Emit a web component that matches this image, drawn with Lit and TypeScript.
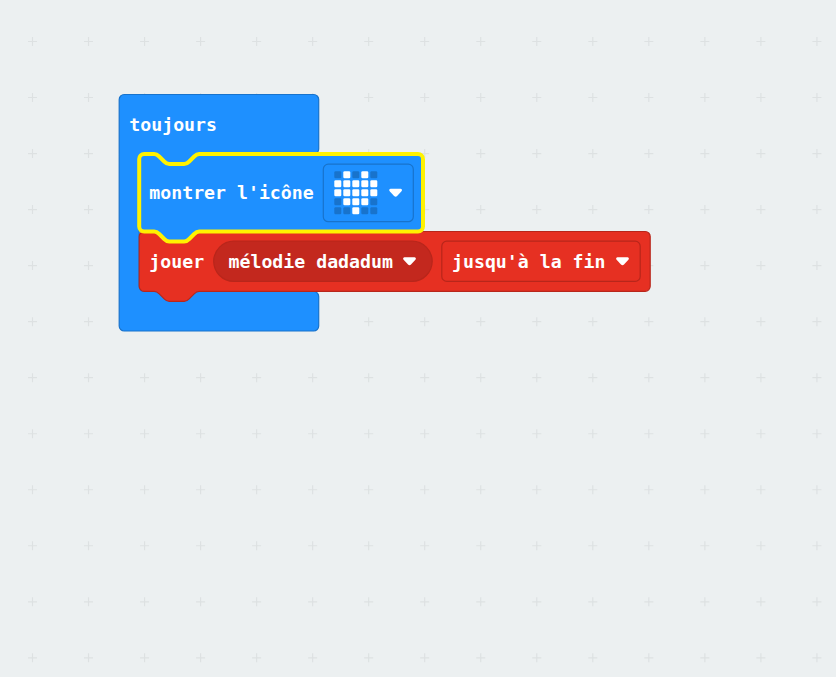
import { LitElement, html, svg, css } from "lit";
import { customElement } from "lit/decorators.js";

const NOTCH = "c2.5 0 3.75 1.25 5 2.5l5 5c1.25 1.25 2.5 2.5 5 2.5h15c2.5 0 3.75 -1.25 5 -2.5l5 -5c1.25 -1.25 2.5 -2.5 5 -2.5";
const NOTCH_BACK = "c-2.5 0 -3.75 1.25 -5 2.5l-5 5c-1.25 1.25 -2.5 2.5 -5 2.5h-15c-2.5 0 -3.75 -1.25 -5 -2.5l-5 -5c-1.25 -1.25 -2.5 -2.5 -5 -2.5";

const statement = (w: number, h: number) =>
  `M0 5a5 5 0 0 1 5 -5h10${NOTCH}H${w - 5}a5 5 0 0 1 5 5V${h - 5}a5 5 0 0 1 -5 5H60${NOTCH_BACK}H5a5 5 0 0 1 -5 -5z`;

const FOREVER =
  `M0 5a5 5 0 0 1 5 -5H194.5a5 5 0 0 1 5 5V54.5a5 5 0 0 1 -5 5H80${NOTCH_BACK}H25a5 5 0 0 0 -5 5V192a5 5 0 0 0 5 5H194.5a5 5 0 0 1 5 5V231.5a5 5 0 0 1 -5 5H5a5 5 0 0 1 -5 -5z`;

const HEART = [".#.#.", "#####", "#####", ".###.", "..#.."];
const COLUMNS = Array.from({ length: 15 }, (_, i) => 32.5 + i * 56.03);
const ROWS = Array.from({ length: 12 }, (_, i) => 41.5 + i * 56.03);
const CROSSES = ROWS.flatMap((y) => COLUMNS.map((x) => `M${x - 4.5} ${y}h9M${x} ${y - 4.5}v9`)).join("");

@customElement("app-root")
export class AppRoot extends LitElement {
  static styles = css`
    :host { display: block; width: 100%; height: 100vh; background: #ecf0f1; overflow: hidden; }
    svg { display: block; width: 836px; height: 677px; }
    text { font: bold 18px "DejaVu Sans Mono", monospace; fill: #fff; }
    .cross { stroke: #dde1e2; stroke-width: 1.15; fill: none; }
    .blue { fill: #1e90ff; stroke: #1873cc; stroke-width: 1.2; }
    .red { fill: #e63022; stroke: #b8261b; stroke-width: 1.2; }
    .selected { fill: #1e90ff; stroke: #fff200; stroke-width: 4; }
    .pill { fill: #c3281e; stroke: #b8261b; stroke-width: 1.2; }
    .on { fill: #fff; }
    .off { fill: #1873cc; }
    .arrow { fill: #fff; }
  `;

  private label(x: number, y: number, s: string) {
    return svg`<text x=${x} y=${y} textLength=${s.length * 10.96} lengthAdjust="spacingAndGlyphs">${s}</text>`;
  }

  private arrow(x: number, y: number) {
    return svg`<path class="arrow" transform="translate(${x} ${y})" d="M1.3 0H11.5Q12.8 .1 12.8 1.3Q12.8 2 12.1 2.8L7.9 7.3Q6.4 8.6 4.9 7.3L.7 2.8Q0 2 0 1.3Q0 .1 1.3 0Z"/>`;
  }

  render() {
    return html`<svg viewBox="0 0 836 677">
      <path class="cross" d=${CROSSES}/>
      <path class="blue" transform="translate(119.2 94.5)" d=${FOREVER}/>
      <path class="red" transform="translate(139.2 231.5)" d=${statement(511, 59.8)}/>
      <path class="selected" transform="translate(139.2 154)" d=${statement(283.8, 77.5)}/>
      ${this.label(129.3, 131, "toujours")}
      ${this.label(149.3, 199, "montrer l'icône")}
      <rect class="blue" x="323.3" y="164.2" width="90" height="57.5" rx="5"/>
      ${HEART.map((row, r) =>
        [...row].map((c, i) => svg`<rect class=${c === "#" ? "on" : "off"} x=${334.3 + i * 9} y=${171.3 + r * 9} width="7" height="7" rx="1.3"/>`))}
      ${this.arrow(389.2, 188.8)}
      ${this.label(149.3, 268, "jouer")}
      <rect class="pill" x="213.7" y="241.2" width="218.5" height="40.2" rx="20.1"/>
      ${this.label(228.5, 268, "mélodie dadadum")}
      ${this.arrow(403.1, 257.3)}
      <rect class="red" x="441.8" y="241.2" width="198.4" height="40.2" rx="5"/>
      ${this.label(452, 268, "jusqu'à la fin")}
      ${this.arrow(616.1, 257.3)}
    </svg>`;
  }
}
